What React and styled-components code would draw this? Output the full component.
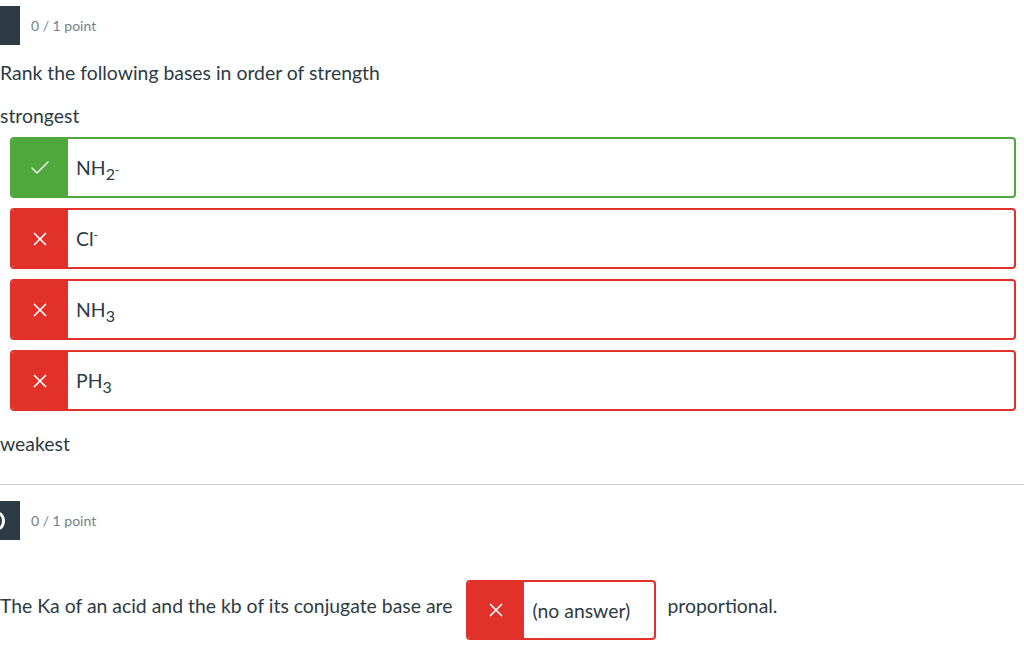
import React from 'react';
import styled, { createGlobalStyle } from 'styled-components';
import { Check, X } from 'lucide-react';

const colors = {
  dark: '#2d3b45',
  muted: '#73818b',
  correct: '#50a83c',
  wrong: '#e1312a',
  rule: '#c7cdd1',
};

const GlobalStyle = createGlobalStyle`
  body {
    margin: 0;
    font-family: Lato, "Open Sans", sans-serif;
    color: ${colors.dark};
    background: #fff;
  }
`;

const Page = styled.div`
  padding-top: 6px;
`;

const Header = styled.div`
  display: flex;
  align-items: center;
  margin-top: ${(props) => props.top || 0}px;
`;

const Badge = styled.div`
  position: relative;
  width: 20px;
  height: 39px;
  background: ${colors.dark};
  overflow: hidden;
  flex-shrink: 0;

  /* right edge of the question number, clipped by the page edge */
  ${(props) =>
    props.number &&
    `
    &::before {
      content: '';
      position: absolute;
      left: -8px;
      top: 11px;
      width: 7px;
      height: 12px;
      border: 3px solid #fff;
      border-radius: 50%;
    }
  `}
`;

const Points = styled.span`
  margin-left: 11px;
  font-size: 14px;
  color: ${colors.muted};
`;

const Text = styled.div`
  font-size: 19.4px;
  line-height: 27px;
  margin-top: ${(props) => props.top || 0}px;
`;

const List = styled.div`
  display: flex;
  flex-direction: column;
  gap: 10px;
  margin: 8px 8px 0 10px;
`;

const Answer = styled.div`
  display: flex;
  height: ${(props) => props.h || 61}px;
  width: ${(props) => (props.w ? props.w + 'px' : 'auto')};
  box-sizing: border-box;
  border: 2px solid ${(props) => (props.ok ? colors.correct : colors.wrong)};
  border-radius: 4px;
  overflow: hidden;
  flex-shrink: 0;
`;

const Mark = styled.div`
  width: 56px;
  flex-shrink: 0;
  background: ${(props) => (props.ok ? colors.correct : colors.wrong)};
  color: #fff;
  display: flex;
  align-items: center;
  justify-content: center;
`;

const Value = styled.div`
  display: flex;
  align-items: center;
  padding-left: 8px;
  font-size: 19.4px;
`;

const Formula = styled.span`
  line-height: 22px;
  sub, sup {
    line-height: 0;
  }
  sub {
    font-size: 16px;
    vertical-align: -5px;
  }
  sup {
    font-size: 12px;
    vertical-align: 7px;
  }
  sub sup {
    font-size: 11px;
    vertical-align: 6px;
  }
`;

const Rule = styled.hr`
  border: none;
  border-top: 1px solid ${colors.rule};
  margin: 27px 0 0;
`;

const Sentence = styled.div`
  display: flex;
  align-items: flex-start;
  margin-top: 40px;
  font-size: 19.4px;
`;

const Words = styled.span`
  line-height: 27px;
  padding-top: 12px;
  white-space: nowrap;
  margin-left: ${(props) => props.left || 0}px;
  margin-right: ${(props) => props.right || 0}px;
`;

const rows = [
  { ok: true, label: <>NH<sub>2<sup>-</sup></sub></> },
  { ok: false, label: <>Cl<sup>-</sup></> },
  { ok: false, label: <>NH<sub>3</sub></> },
  { ok: false, label: <>PH<sub>3</sub></> },
];

const Icon = ({ ok }) =>
  ok ? <Check size={24} strokeWidth={1.4} /> : <X size={22} strokeWidth={1.8} />;

export default function App() {
  return (
    <Page>
      <GlobalStyle />
      <Header>
        <Badge />
        <Points>0 / 1 point</Points>
      </Header>
      <Text top={14}>Rank the following bases in order of strength</Text>
      <Text top={16}>strongest</Text>
      <List>
        {rows.map((row, i) => (
          <Answer key={i} ok={row.ok}>
            <Mark ok={row.ok}>
              <Icon ok={row.ok} />
            </Mark>
            <Value>
              <Formula>{row.label}</Formula>
            </Value>
          </Answer>
        ))}
      </List>
      <Text top={19}>weakest</Text>
      <Rule />
      <Header top={16}>
        <Badge number />
        <Points>0 / 1 point</Points>
      </Header>
      <Sentence>
        <Words right={14}>The Ka of an acid and the kb of its conjugate base are</Words>
        <Answer w={190} h={60}>
          <Mark>
            <Icon />
          </Mark>
          <Value>(no answer)</Value>
        </Answer>
        <Words left={11}>proportional.</Words>
      </Sentence>
    </Page>
  );
}
